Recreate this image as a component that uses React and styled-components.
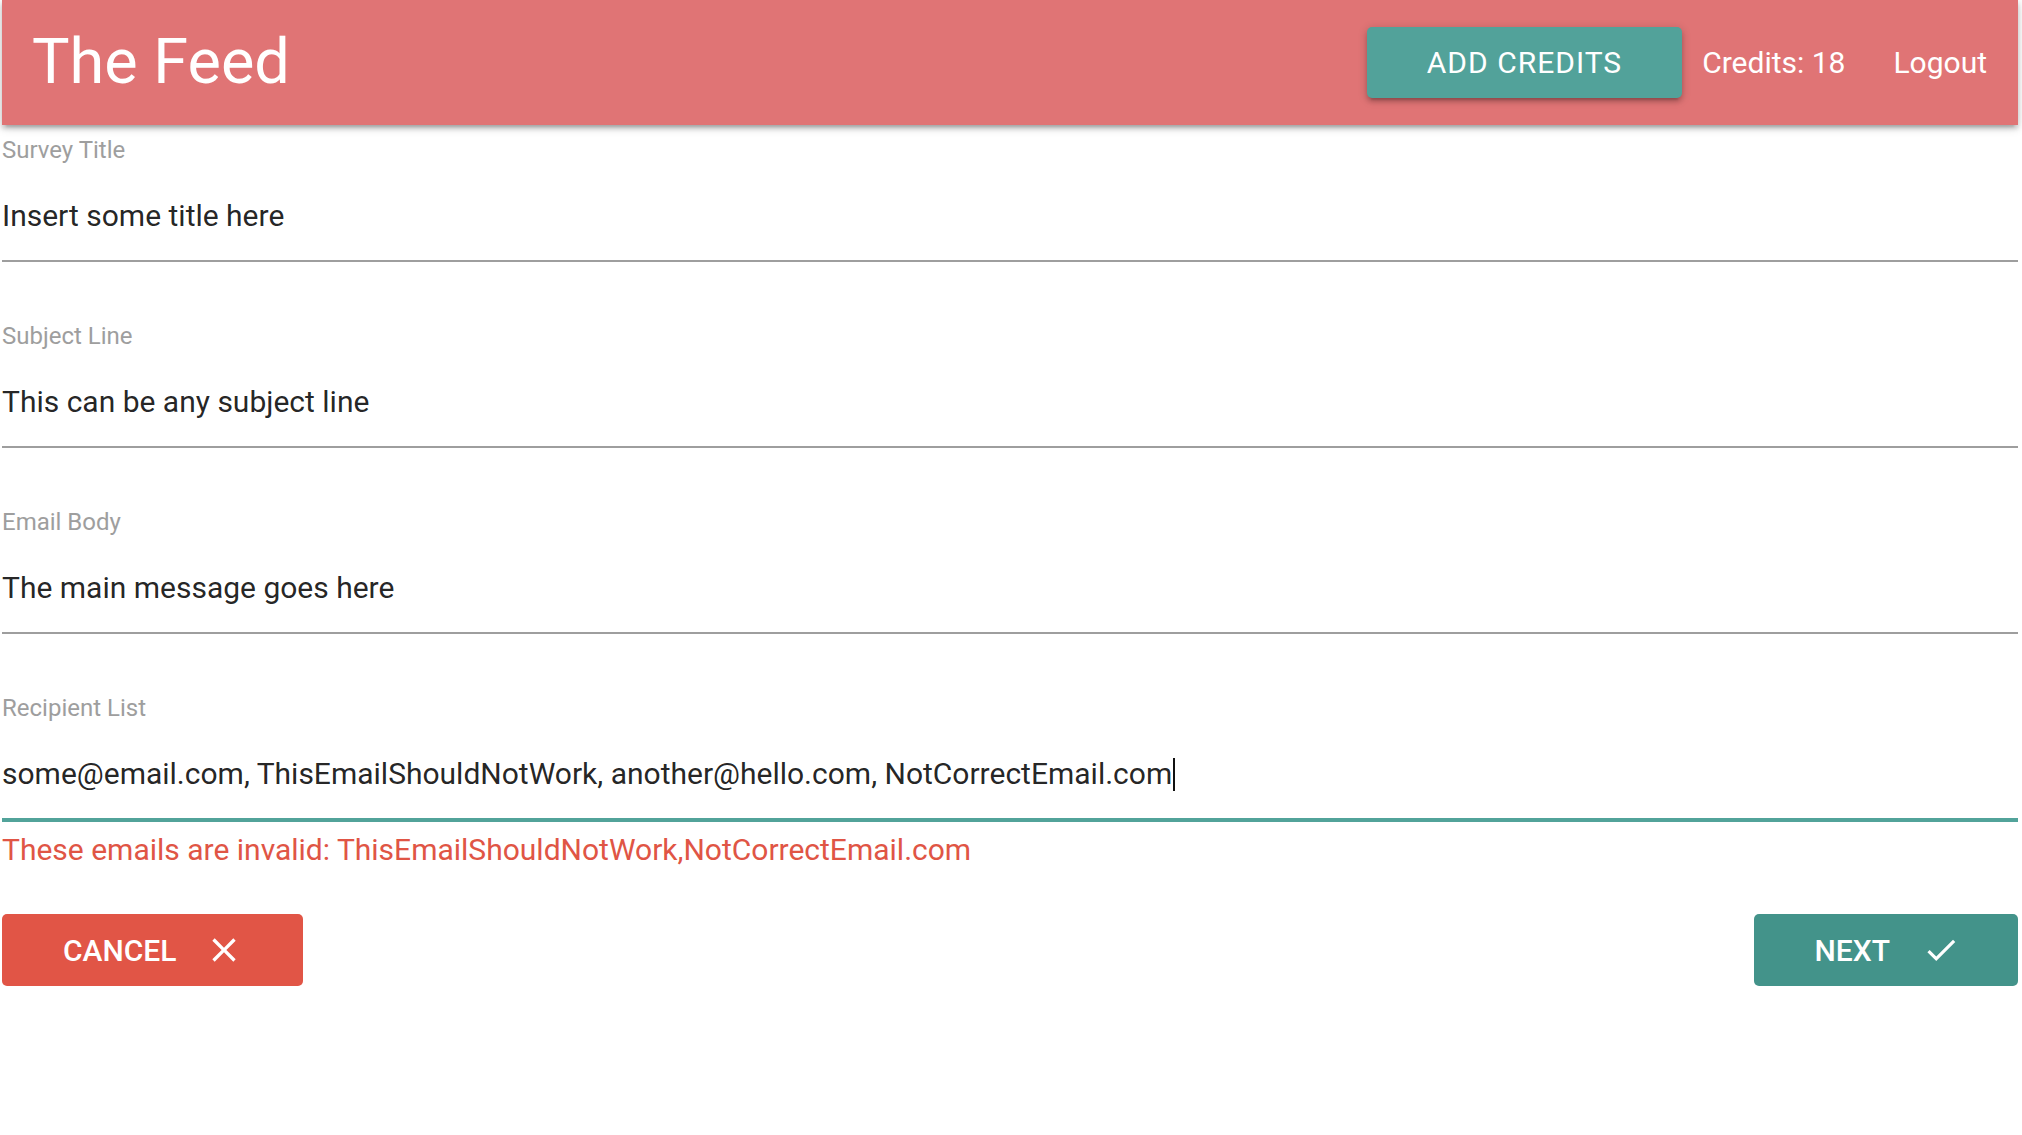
import React from 'react';
import styled, { createGlobalStyle } from 'styled-components';

const GlobalStyle = createGlobalStyle`
  body {
    margin: 0;
    background: #ffffff;
    font-family: Roboto, "Liberation Sans", Arial, sans-serif;
    -webkit-font-smoothing: antialiased;
  }
`;

const Page = styled.div`
  margin: 0 4px 0 2px;
`;

const Nav = styled.nav`
  position: relative;
  z-index: 1;
  height: 125px;
  display: flex;
  align-items: center;
  justify-content: space-between;
  padding: 0 31px 0 30px;
  background-color: #e07475;
  color: #ffffff;
  box-shadow: 0 4px 4px 0 rgba(0, 0, 0, 0.14), 0 6px 2px -4px rgba(0, 0, 0, 0.12),
    0 2px 10px 0 rgba(0, 0, 0, 0.2);
`;

const Brand = styled.a`
  font-size: 63px;
  line-height: 1;
  color: #ffffff;
  text-decoration: none;
  margin-top: -2px;
`;

const NavRight = styled.ul`
  display: flex;
  align-items: center;
  list-style: none;
  margin: 0;
  padding: 0;
`;

const NavItem = styled.li`
  font-size: 30px;
  line-height: 36px;
  color: #ffffff;
  margin-left: ${(p) => p.$gap}px;
`;

const CreditsButton = styled.button`
  height: 71px;
  padding: 0 60px;
  border: none;
  border-radius: 5px;
  background-color: #52a29a;
  color: #ffffff;
  font-family: inherit;
  font-size: 30px;
  letter-spacing: 1px;
  text-transform: uppercase;
  cursor: pointer;
  box-shadow: 0 4px 4px 0 rgba(0, 0, 0, 0.14), 0 6px 2px -4px rgba(0, 0, 0, 0.12),
    0 2px 10px 0 rgba(0, 0, 0, 0.2);
`;

const Form = styled.form`
  padding-top: 12px;
`;

const Fields = styled.div`
  display: flex;
  flex-direction: column;
  gap: 61px;
`;

const Label = styled.label`
  display: block;
  font-size: 24px;
  line-height: 27px;
  color: #9e9e9e;
`;

const Value = styled.div`
  padding: 34px 0 26px;
  font-size: 30px;
  line-height: 36px;
  color: rgba(0, 0, 0, 0.87);
  white-space: nowrap;
  border-bottom: 2px solid ${(p) => (p.$focused ? '#52a39a' : '#9e9e9e')};
  box-shadow: ${(p) => (p.$focused ? '0 2px 0 0 #52a39a' : 'none')};
`;

const Caret = styled.span`
  display: inline-block;
  width: 2px;
  height: 33px;
  margin-left: 1px;
  background: #111111;
  vertical-align: -7px;
`;

const ErrorText = styled.div`
  margin-top: 12px;
  font-size: 30px;
  line-height: 36px;
  color: #e05545;
`;

const ButtonRow = styled.div`
  display: flex;
  justify-content: space-between;
  margin-top: 46px;
`;

const ActionButton = styled.button`
  display: flex;
  align-items: center;
  gap: ${(p) => (p.$variant === 'next' ? 32 : 27)}px;
  height: 72px;
  padding: 0 ${(p) => (p.$variant === 'next' ? 58 : 59)}px 0 61px;
  border: none;
  border-radius: 5px;
  background-color: ${(p) => (p.$variant === 'next' ? '#43938a' : '#e15546')};
  color: #ffffff;
  font-family: inherit;
  font-size: 30px;
  font-weight: 500;
  text-transform: uppercase;
  cursor: pointer;

  svg {
    display: block;
    flex-shrink: 0;
  }
`;

const CloseIcon = () => (
  <svg width="40" height="40" viewBox="0 0 24 24" fill="#ffffff">
    <path d="M19 6.41L17.59 5 12 10.59 6.41 5 5 6.41 10.59 12 5 17.59 6.41 19 12 13.41 17.59 19 19 17.59 13.41 12z" />
  </svg>
);

const CheckIcon = () => (
  <svg width="38" height="38" viewBox="0 0 24 24" fill="#ffffff">
    <path d="M9 16.17L4.83 12l-1.42 1.41L9 19 21 7l-1.41-1.41z" />
  </svg>
);

const fields = [
  { label: 'Survey Title', value: 'Insert some title here' },
  { label: 'Subject Line', value: 'This can be any subject line' },
  { label: 'Email Body', value: 'The main message goes here' },
  {
    label: 'Recipient List',
    value: 'some@email.com, ThisEmailShouldNotWork, another@hello.com, NotCorrectEmail.com',
    focused: true,
  },
];

export default function App() {
  return (
    <Page>
      <GlobalStyle />
      <Nav>
        <Brand href="#">The Feed</Brand>
        <NavRight>
          <li>
            <CreditsButton type="button">Add Credits</CreditsButton>
          </li>
          <NavItem $gap={20}>Credits: 18</NavItem>
          <NavItem $gap={48}>Logout</NavItem>
        </NavRight>
      </Nav>
      <Form onSubmit={(e) => e.preventDefault()}>
        <Fields>
          {fields.map((f) => (
            <div key={f.label}>
              <Label>{f.label}</Label>
              <Value $focused={f.focused}>
                {f.value}
                {f.focused && <Caret />}
              </Value>
            </div>
          ))}
        </Fields>
        <ErrorText>These emails are invalid: ThisEmailShouldNotWork,NotCorrectEmail.com</ErrorText>
        <ButtonRow>
          <ActionButton type="button" $variant="cancel">
            Cancel
            <CloseIcon />
          </ActionButton>
          <ActionButton type="submit" $variant="next">
            Next
            <CheckIcon />
          </ActionButton>
        </ButtonRow>
      </Form>
    </Page>
  );
}
